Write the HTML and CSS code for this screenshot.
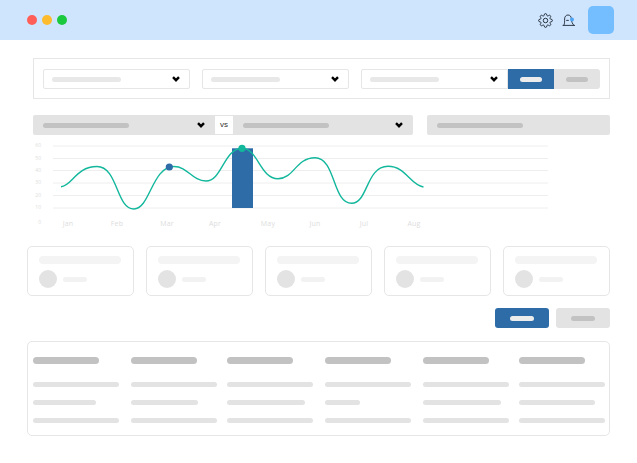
FILE: index.html
```html
<!DOCTYPE html>
<html lang="en">
<head>
  <meta charset="UTF-8">
  <meta name="viewport" content="width=device-width, initial-scale=1.0">
  <title>Dashboard</title>
  <link rel="stylesheet" href="styles.css">
</head>
<body>

  <header class="topbar">
    <div class="dots">
      <span class="dot red"></span>
      <span class="dot yellow"></span>
      <span class="dot green"></span>
    </div>
    <div class="tools">
      <svg class="gear" viewBox="0 0 24 24">
        <circle cx="12" cy="12" r="3.6"></circle>
        <path d="M19.4 15a1.65 1.65 0 0 0 .33 1.82l.06.06a2 2 0 0 1 0 2.83 2 2 0 0 1-2.83 0l-.06-.06a1.65 1.65 0 0 0-1.82-.33 1.65 1.65 0 0 0-1 1.51V21a2 2 0 0 1-2 2 2 2 0 0 1-2-2v-.09A1.65 1.65 0 0 0 9 19.4a1.65 1.65 0 0 0-1.82.33l-.06.06a2 2 0 0 1-2.83 0 2 2 0 0 1 0-2.83l.06-.06a1.65 1.65 0 0 0 .33-1.82 1.65 1.65 0 0 0-1.51-1H3a2 2 0 0 1-2-2 2 2 0 0 1 2-2h.09A1.65 1.65 0 0 0 4.6 9a1.65 1.65 0 0 0-.33-1.82l-.06-.06a2 2 0 0 1 0-2.83 2 2 0 0 1 2.83 0l.06.06a1.65 1.65 0 0 0 1.82.33H9a1.65 1.65 0 0 0 1-1.51V3a2 2 0 0 1 2-2 2 2 0 0 1 2 2v.09a1.65 1.65 0 0 0 1 1.51 1.65 1.65 0 0 0 1.82-.33l.06-.06a2 2 0 0 1 2.83 0 2 2 0 0 1 0 2.83l-.06.06a1.65 1.65 0 0 0-.33 1.82V9a1.65 1.65 0 0 0 1.51 1H21a2 2 0 0 1 2 2 2 2 0 0 1-2 2h-.09a1.65 1.65 0 0 0-1.51 1z"></path>
      </svg>
      <svg class="bell" viewBox="0 0 14 12">
        <path d="M0.6 11.4 H13"></path>
        <path d="M1.8 11.4 C2.8 9.4 2.6 7 2.6 5 C2.6 2.6 4 1 6 1 C8 1 9.4 2.6 9.4 5 C9.4 7 10.2 9.8 12 11.4"></path>
        <path d="M4.2 6.4 H6.8"></path>
        <circle class="bell-dot" cx="10" cy="5.6" r="2"></circle>
      </svg>
      <div class="avatar"></div>
    </div>
  </header>

  <main class="page">

    <section class="filters">
      <div class="select">
        <span class="bar"></span>
        <svg class="chevron" viewBox="0 0 8 6"><path d="M1 1.2 L4 4.2 L7 1.2"></path></svg>
      </div>
      <div class="select">
        <span class="bar"></span>
        <svg class="chevron" viewBox="0 0 8 6"><path d="M1 1.2 L4 4.2 L7 1.2"></path></svg>
      </div>
      <div class="select">
        <span class="bar"></span>
        <svg class="chevron" viewBox="0 0 8 6"><path d="M1 1.2 L4 4.2 L7 1.2"></path></svg>
      </div>
      <div class="toggle">
        <div class="toggle-on"><span class="pill"></span></div>
        <div class="toggle-off"><span class="pill"></span></div>
      </div>
    </section>

    <section class="compare-row">
      <div class="compare">
        <div class="compare-side">
          <span class="bar-dark"></span>
          <svg class="chevron" viewBox="0 0 8 6"><path d="M1 1.2 L4 4.2 L7 1.2"></path></svg>
        </div>
        <div class="vs">vs</div>
        <div class="compare-side">
          <span class="bar-dark"></span>
          <svg class="chevron" viewBox="0 0 8 6"><path d="M1 1.2 L4 4.2 L7 1.2"></path></svg>
        </div>
      </div>
      <div class="compare-other"><span class="bar-dark"></span></div>
    </section>

    <svg class="chart" viewBox="0 140 637 90">
      <g class="grid">
        <line x1="53" y1="146" x2="548" y2="146"></line>
        <line x1="53" y1="158.5" x2="548" y2="158.5"></line>
        <line x1="53" y1="170.5" x2="548" y2="170.5"></line>
        <line x1="53" y1="183" x2="548" y2="183"></line>
        <line x1="53" y1="195.5" x2="548" y2="195.5"></line>
        <line x1="53" y1="208" x2="548" y2="208"></line>
      </g>
      <g class="y-labels">
        <text x="41" y="147">60</text>
        <text x="41" y="159.5">50</text>
        <text x="41" y="171.5">40</text>
        <text x="41" y="184">30</text>
        <text x="41" y="196.5">20</text>
        <text x="41" y="209">10</text>
        <text x="41" y="224">0</text>
      </g>
      <g class="x-labels">
        <text x="68" y="226">Jan</text>
        <text x="117" y="226">Feb</text>
        <text x="167" y="226">Mar</text>
        <text x="215" y="226">Apr</text>
        <text x="268" y="226">May</text>
        <text x="315" y="226">Jun</text>
        <text x="364" y="226">Jul</text>
        <text x="414" y="226">Aug</text>
      </g>
      <rect class="column" x="232" y="148.3" width="21" height="59.7"></rect>
      <path class="curve" d="M61 186.7 C72 186 76 166.5 97 166.5 C118 166.5 116 209 134 209 C150 209 152 166.5 174 166.5 C188 166.5 192 181 206 181 C222 181 224 148.3 242 148.3 C258 148.3 260 178.7 278 178.7 C294 178.7 296 157.7 315 157.7 C336 157.7 332 203.3 351.7 203.3 C368 203.3 366 166.3 388 166.3 C406 166.3 410 185 423.5 187"></path>
      <circle class="point-blue" cx="169.3" cy="167" r="3.6"></circle>
      <circle class="point-teal" cx="242" cy="148.3" r="3.6"></circle>
    </svg>

    <section class="cards">
      <div class="card"><span class="card-title"></span><div class="card-row"><span class="circle"></span><span class="card-line"></span></div></div>
      <div class="card"><span class="card-title"></span><div class="card-row"><span class="circle"></span><span class="card-line"></span></div></div>
      <div class="card"><span class="card-title"></span><div class="card-row"><span class="circle"></span><span class="card-line"></span></div></div>
      <div class="card"><span class="card-title"></span><div class="card-row"><span class="circle"></span><span class="card-line"></span></div></div>
      <div class="card"><span class="card-title"></span><div class="card-row"><span class="circle"></span><span class="card-line"></span></div></div>
    </section>

    <section class="actions">
      <div class="btn btn-blue"><span class="pill"></span></div>
      <div class="btn btn-grey"><span class="pill"></span></div>
    </section>

    <section class="table">
      <span class="th"></span><span class="th"></span><span class="th"></span><span class="th"></span><span class="th"></span><span class="th"></span>

      <span class="td"></span><span class="td"></span><span class="td"></span><span class="td"></span><span class="td"></span><span class="td"></span>

      <span class="td w63"></span><span class="td w67"></span><span class="td w78"></span><span class="td w35"></span><span class="td w78"></span><span class="td w76"></span>

      <span class="td"></span><span class="td"></span><span class="td"></span><span class="td"></span><span class="td"></span><span class="td"></span>
    </section>

  </main>

</body>
</html>
```

FILE: styles.css
```css
body {
  font-family: "Liberation Sans", Arial, sans-serif;
  background: #fff;
  margin: 0;
  padding: 0;
}

/* top bar */
.topbar {
  height: 40px;
  background-color: #cfe5fe;
  display: flex;
  align-items: center;
  justify-content: space-between;
  padding: 0 23px 0 27px;
}

.dots {
  display: flex;
  gap: 5px;
  margin-top: -1px;
}

.dot {
  width: 10px;
  height: 10px;
  border-radius: 50%;
}

.red { background-color: #ff5f57; }
.yellow { background-color: #fdbc2e; }
.green { background-color: #1bc93f; }

.tools {
  display: flex;
  align-items: center;
}

.gear {
  width: 15px;
  height: 15px;
  fill: none;
  stroke: #1d2733;
  stroke-width: 1.5;
}

.bell {
  width: 14px;
  height: 12px;
  margin-left: 9px;
  fill: none;
  stroke: #1d2733;
  stroke-width: 0.9;
}

.bell-dot {
  fill: #4ea4f5;
  stroke: none;
}

.avatar {
  width: 26px;
  height: 28px;
  margin-left: 12px;
  border-radius: 5px;
  background-color: #74bdff;
}

/* content */
.page {
  padding: 18px 27px 0;
}

.filters {
  margin-left: 6px;
  height: 41px;
  box-sizing: border-box;
  border: 1px solid #e6e6e6;
  padding: 10px 9px;
  display: flex;
}

.select {
  width: 147px;
  height: 20px;
  box-sizing: border-box;
  border: 1px solid #e6e6e6;
  border-radius: 2px;
  margin-right: 12px;
  padding: 0 9px 0 8px;
  display: flex;
  align-items: center;
  justify-content: space-between;
}

.select:nth-child(3) {
  margin-right: 0;
  border-radius: 2px 0 0 2px;
}

.bar {
  width: 69px;
  height: 5px;
  border-radius: 3px;
  background-color: #e8e8e8;
}

.chevron {
  width: 8px;
  height: 6px;
  fill: none;
  stroke: #000;
  stroke-width: 2.4;
}

.toggle {
  display: flex;
  height: 20px;
}

.toggle-on, .toggle-off {
  width: 46px;
  display: flex;
  align-items: center;
  justify-content: center;
}

.toggle-on {
  background-color: #2e6ca8;
}

.toggle-off {
  background-color: #e3e3e3;
  border-radius: 0 3px 3px 0;
}

.pill {
  width: 22px;
  height: 5px;
  border-radius: 3px;
}

.toggle-on .pill, .btn-blue .pill {
  background-color: #ececec;
}

.toggle-off .pill, .btn-grey .pill {
  background-color: #c2c2c2;
}

.compare-row {
  margin: 16px 0 0 6px;
  display: flex;
  gap: 14px;
}

.compare {
  width: 380px;
  height: 20px;
  display: flex;
  align-items: center;
  background-color: #e3e3e3;
  border-radius: 2px;
}

.compare-side {
  width: 180px;
  box-sizing: border-box;
  display: flex;
  align-items: center;
  justify-content: space-between;
  padding: 0 10px;
}

.compare-side:first-child {
  width: 182px;
  padding-right: 10px;
}

.vs {
  width: 18px;
  height: 18px;
  flex: none;
  background-color: #fff;
  color: #333;
  font-size: 8px;
  line-height: 18px;
  text-align: center;
}

.bar-dark {
  width: 86px;
  height: 5px;
  border-radius: 3px;
  background-color: #c2c2c2;
}

.compare-other {
  flex: 1;
  height: 20px;
  background-color: #e3e3e3;
  border-radius: 2px;
  display: flex;
  align-items: center;
  padding-left: 10px;
}

/* chart */
.chart {
  display: block;
  width: 637px;
  height: 90px;
  margin: 5px -27px 0;
}

.grid line {
  stroke: #eeeeee;
  stroke-width: 1;
}

.y-labels text {
  font-family: "Open Sans", sans-serif;
  font-size: 5px;
  fill: #dddddd;
  text-anchor: end;
}

.x-labels text {
  font-family: "Open Sans", sans-serif;
  font-size: 7px;
  letter-spacing: 0.2px;
  fill: #dddddd;
  text-anchor: middle;
}

.column {
  fill: #2e6ca8;
}

.curve {
  fill: none;
  stroke: #12b79c;
  stroke-width: 1.4;
}

.point-blue {
  fill: #2e6ca8;
}

.point-teal {
  fill: #12b79c;
}

/* cards */
.cards {
  margin-top: 16px;
  display: grid;
  grid-template-columns: repeat(5, 107px);
  gap: 12px;
}

.card {
  height: 50px;
  box-sizing: border-box;
  border: 1px solid #e6e6e6;
  border-radius: 5px;
  padding: 9px 11px;
}

.card-title {
  display: block;
  width: 82px;
  height: 8px;
  border-radius: 4px;
  background-color: #f4f4f4;
}

.card-row {
  margin-top: 6px;
  display: flex;
  align-items: center;
  gap: 6px;
}

.circle {
  width: 18px;
  height: 18px;
  border-radius: 50%;
  background-color: #e3e3e3;
}

.card-line {
  width: 24px;
  height: 5px;
  border-radius: 3px;
  background-color: #f2f2f2;
}

/* buttons */
.actions {
  margin-top: 12px;
  display: flex;
  justify-content: flex-end;
  gap: 7px;
}

.btn {
  width: 54px;
  height: 20px;
  border-radius: 3px;
  display: flex;
  align-items: center;
  justify-content: center;
}

.btn .pill {
  width: 24px;
}

.btn-blue {
  background-color: #2e6ca8;
}

.btn-grey {
  background-color: #e3e3e3;
}

/* table */
.table {
  margin-top: 13px;
  height: 95px;
  box-sizing: border-box;
  border: 1px solid #e6e6e6;
  border-radius: 5px;
  padding: 15px 4px 15px 5px;
  display: grid;
  grid-template-columns: 98px 96px 98px 98px 96px 1fr;
  grid-auto-rows: 5px;
  row-gap: 13px;
}

.th {
  width: 66px;
  height: 7px;
  border-radius: 4px;
  background-color: #c2c2c2;
  margin-bottom: 5px;
}

.td {
  width: 86px;
  height: 5px;
  border-radius: 3px;
  background-color: #e3e3e3;
}

.th:nth-child(-n+6) {
  grid-row: 1;
}

.td:nth-child(n+7) {
  margin-top: 7px;
}

.w63 { width: 63px; }
.w67 { width: 67px; }
.w78 { width: 78px; }
.w35 { width: 35px; }
.w76 { width: 76px; }
```
